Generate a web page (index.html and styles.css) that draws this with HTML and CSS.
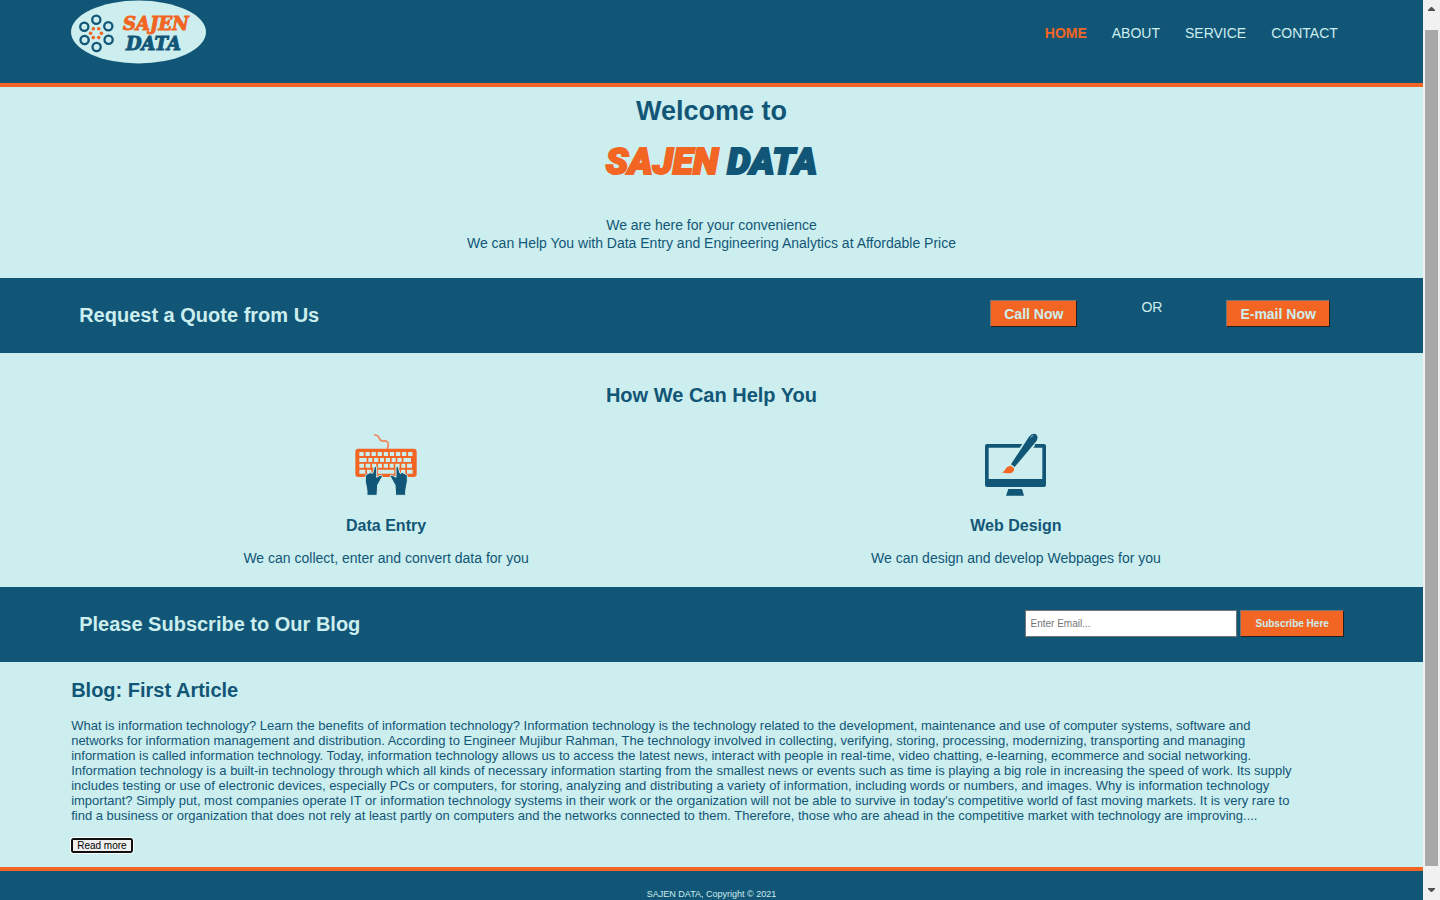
FILE: index.html
```html
<!DOCTYPE html>
<html lang="en">
<head>
<meta charset="utf-8">
<title>Sajen Data</title>
<link rel="stylesheet" href="styles.css">
</head>
<body>
<div class="page">
  <header class="header">
    <div class="container header-row">
      <a class="brand" href="#" aria-label="Sajen Data">
        <svg class="brand-logo" viewBox="0 0 136 64">
          <ellipse cx="67.5" cy="32" rx="67.5" ry="31.5" fill="#cceeee"/>
          <g fill="none" stroke="#125677" stroke-width="2.3">
            <circle cx="25.3" cy="19.7" r="4.1"/><circle cx="37.3" cy="26.3" r="4.1"/>
            <circle cx="37.6" cy="39.7" r="4.1"/><circle cx="25.6" cy="47" r="4.1"/>
            <circle cx="13.6" cy="40" r="4.1"/><circle cx="13.3" cy="26.7" r="4.1"/>
          </g>
          <g fill="#f26522">
            <circle cx="22.3" cy="28.8" r="1.8"/><circle cx="27.7" cy="28.8" r="1.8"/><circle cx="30.4" cy="33.2" r="1.8"/>
            <circle cx="27.7" cy="37.6" r="1.8"/><circle cx="22.3" cy="37.6" r="1.8"/><circle cx="19.6" cy="33.2" r="1.8"/>
          </g>
          <text class="logo-word logo-orange" x="52" y="30">SAJEN</text>
          <text class="logo-word logo-blue" x="55" y="50">DATA</text>
        </svg>
      </a>
      <nav class="nav">
        <a class="current" href="#">HOME</a>
        <a href="#">ABOUT</a>
        <a href="#">SERVICE</a>
        <a href="#">CONTACT</a>
      </nav>
    </div>
  </header>
  <main>
    <section class="welcome">
      <h1>Welcome to</h1>
      <p class="wordmark"><span>SAJEN</span> DATA</p>
      <p class="tagline">We are here for your convenience<br>We can Help You with Data Entry and Engineering Analytics at Affordable Price</p>
    </section>
    <section class="band">
      <div class="container band-row">
        <h2>Request a Quote from Us</h2>
        <div class="quote-actions">
          <button class="btn" type="button">Call Now</button>
          <span>OR</span>
          <button class="btn" type="button">E-mail Now</button>
        </div>
      </div>
    </section>
    <section class="help container">
      <h2>How We Can Help You</h2>
      <div class="services">
        <article>
          <svg class="icon" viewBox="42 24 192 192" aria-hidden="true">
            <path d="M102 30c12-1 13 4 16 10s6 9 13 8c10-2 15 6 14 12l-3 12" fill="none" stroke="#f0835a" stroke-width="5"/>
            <rect x="46" y="71" width="184" height="85" rx="9" fill="#f26522"/>
            <g fill="none" stroke="#cceeee" stroke-width="12">
              <path d="M58 87H218" stroke-dasharray="13 5.3"/>
              <path d="M58 105h22m5 0h12m5 0h13m5 0h12m5 0h13m5 0h12m5 0h13m5 0h23"/>
              <path d="M58 122h14m5 0h14m5 0h13m5 0h12m5 0h13m5 0h12m5 0h13m5 0h12m5 0h15"/>
              <path d="M58 140h18m5 0h13m20 0h49m20 0h13m5 0h17"/>
            </g>
            <path d="M81 211V197L76 169V151Q77 148 81 149Q82 144 87 145Q90 141 94 144L98 145L103 128Q105 122 110 126V157L120 151Q127 148 127 155L113 180L111 211Z" fill="#125677" stroke="#cceeee" stroke-width="3"/>
            <path d="M197 211V197L202 169V151Q201 148 197 149Q196 144 191 145Q188 141 184 144L180 145L175 128Q173 122 168 126V157L158 151Q151 148 151 155L165 180L167 211Z" fill="#125677" stroke="#cceeee" stroke-width="3"/>
          </svg>
          <h3>Data Entry</h3>
          <p>We can collect, enter and convert data for you</p>
        </article>
        <article>
          <svg class="icon" viewBox="42 24 192 192" aria-hidden="true">
            <path fill="#125677" fill-rule="evenodd" d="M51 57H222Q228 57 228 63V180Q228 186 222 186H51Q45 186 45 180V63Q45 57 51 57ZM56 68V162H217V68Z"/>
            <path d="M159 54H190L196 60L184 77H143Z" fill="#cceeee"/>
            <path fill="#125677" d="M115 192h41l6 20h-54zM123 118L177 35Q187 23 198 28Q206 35 200 47L134 126Z"/>
            <path fill="#f26522" d="M94 142Q104 141 106 132Q111 123 122 122L132 130Q134 139 124 144Q111 146 94 142Z"/>
            <path d="M181 38q4-6 9-6" fill="none" stroke="#cceeee" stroke-width="2"/>
          </svg>
          <h3>Web Design</h3>
          <p>We can design and develop Webpages for you</p>
        </article>
      </div>
    </section>
    <section class="band">
      <div class="container band-row">
        <h2>Please Subscribe to Our Blog</h2>
        <form class="subscribe">
          <input type="email" aria-label="Email" placeholder="Enter Email...">
          <button class="btn btn-small" type="button">Subscribe Here</button>
        </form>
      </div>
    </section>
    <section class="blog container">
      <h2>Blog: First Article</h2>
      <p>What is information technology? Learn the benefits of information technology? Information technology is the technology related to the development, maintenance and use of computer systems, software and networks for information management and distribution. According to Engineer Mujibur Rahman, The technology involved in collecting, verifying, storing, processing, modernizing, transporting and managing information is called information technology. Today, information technology allows us to access the latest news, interact with people in real-time, video chatting, e-learning, ecommerce and social networking. Information technology is a built-in technology through which all kinds of necessary information starting from the smallest news or events such as time is playing a big role in increasing the speed of work. Its supply includes testing or use of electronic devices, especially PCs or computers, for storing, analyzing and distributing a variety of information, including words or numbers, and images. Why is information technology important? Simply put, most companies operate IT or information technology systems in their work or the organization will not be able to survive in today's competitive world of fast moving markets. It is very rare to find a business or organization that does not rely at least partly on computers and the networks connected to them. Therefore, those who are ahead in the competitive market with technology are improving....</p>
      <button class="read-more" type="button">Read more</button>
    </section>
  </main>
  <footer class="footer">SAJEN DATA, Copyright © 2021</footer>
</div>
<div class="scrollbar" aria-hidden="true">
  <svg viewBox="0 0 7 4"><path d="M0 4V3L3 0h1l3 3v1z"/></svg>
  <div class="thumb"></div>
  <svg viewBox="0 0 7 4"><path d="M0 0v1l3 3h1l3-3V0z"/></svg>
</div>
</body>
</html>
```
FILE: styles.css
```css
* { box-sizing: border-box; }
body {
  margin: 0;
  height: 100vh;
  overflow: hidden;
  display: flex;
  background: #cceeee;
  color: #125677;
  font: 14px/15px "Liberation Sans", Arial, sans-serif;
}
h1, h2, h3, p { margin: 0; }
h2 { font-size: 20px; line-height: 24px; }
a { color: inherit; text-decoration: none; }
.page { flex: 1; min-width: 0; }
.container { width: 90%; margin: 0 auto; }

.header { background: #125677; color: #cceeee; border-bottom: 4px solid #f26522; }
.header-row { display: flex; justify-content: space-between; padding: 0 14px 19px 0; }
.brand-logo { display: block; width: 136px; height: 64px; }
.logo-word { font: italic 900 18px "DejaVu Serif", serif; stroke-width: 1px; }
.logo-orange { fill: #f26522; stroke: #f26522; }
.logo-blue { fill: #125677; stroke: #125677; }
.nav { display: flex; gap: 25px; padding-top: 26px; }
.nav .current { color: #f26522; font-weight: bold; }

.welcome { text-align: center; padding: 8px 0 26px; }
.welcome h1 { font-size: 27px; line-height: 32px; }
.wordmark { font: italic 900 37px/46px Roboto, sans-serif; padding-top: 12px; -webkit-text-stroke: 2px; }
.wordmark span { color: #f26522; }
.tagline { line-height: 18px; padding-top: 31px; }

.band { background: #125677; color: #cceeee; }
.band-row { display: flex; justify-content: space-between; align-items: center; min-height: 75px; padding: 0 8px 2px; }
.quote-actions { display: flex; gap: 64px; padding: 0 14px 2px 0; }
.btn {
  height: 27px;
  padding: 0 13px;
  border: 1px solid;
  border-color: #767676 #212121 #212121 #767676;
  background: #f26522;
  color: #cceeee;
  font: bold 14px "Liberation Sans", Arial, sans-serif;
}
.btn-small { font-size: 10px; padding: 0 14px; }

.help { text-align: center; padding: 30px 21px 21px 0; }
.help > h2 { padding-left: 21px; }
.services { display: grid; grid-template-columns: 1fr 1fr; padding-top: 26px; }
.icon { display: block; width: 64px; height: 64px; margin: 0 auto; }
.services h3 { font-size: 16px; line-height: 18px; padding: 20px 0 16px; }

.subscribe { display: flex; gap: 3px; }
.subscribe input {
  width: 212px;
  height: 27px;
  padding: 0 4px;
  border: 1px solid #767676;
  background: #fff;
  font: 10px "Liberation Sans", Arial, sans-serif;
}

.blog { padding: 16px 0 14px; }
.blog p { font-size: 13px; padding: 16px 48px 15px 0; }
.read-more {
  display: block;
  height: 15px;
  padding: 0 4px;
  border: 2px solid #101010;
  border-radius: 2px;
  outline: 1px solid #fff;
  background: #efefef;
  color: #000;
  font: 10px/11px "Liberation Sans", Arial, sans-serif;
}
.footer { background: #125677; color: #cceeee; border-top: 4px solid #f26522; padding: 18px 0; text-align: center; font-size: 9px; line-height: 10px; }

.scrollbar { width: 17px; background: #f1f1f1; display: flex; flex-direction: column; align-items: center; padding: 7px 0 8px; }
.scrollbar svg { width: 7px; height: 4px; fill: #505050; }
.thumb { flex: 1; width: 13px; margin: 19px 0 22px; background: #a8a8a8; }
```
